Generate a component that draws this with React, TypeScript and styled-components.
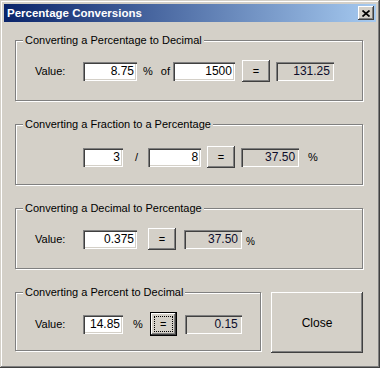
import { createGlobalStyle } from "styled-components";
import styled from "styled-components";

const face = "#d4d0c8";

const GlobalStyle = createGlobalStyle`
  html, body {
    margin: 0;
    padding: 0;
    background: ${face};
  }
  * {
    box-sizing: border-box;
  }
`;

export default function App() {
  return (
    <>
      <GlobalStyle />
      <Window>
        <TitleBar>
          <Title>Percentage Conversions</Title>
          <CloseBox aria-label="close">
            <svg width="8" height="7" viewBox="0 0 8 7">
              <path d="M0.5 0.5 L7.5 6.5 M7.5 0.5 L0.5 6.5" stroke="#000" strokeWidth="1.7" />
            </svg>
          </CloseBox>
        </TitleBar>

        <Body>
          <Group $height={61}>
            <Legend>Converting a Percentage to Decimal</Legend>
            <Row $top={19} $left={19}>
              <Label>Value:</Label>
              <Field defaultValue="8.75" $w={54} readOnly />
              <Text $ml={6}>%</Text>
              <Text $ml={8}>of</Text>
              <Field defaultValue="1500" $w={62} $ml={3} readOnly />
              <EqButton $ml={7}>=</EqButton>
              <Result $w={58} $ml={6}>131.25</Result>
            </Row>
          </Group>

          <Group $height={61}>
            <Legend>Converting a Fraction to a Percentage</Legend>
            <Row $top={21} $left={67}>
              <Field defaultValue="3" $w={40} readOnly />
              <Text $ml={12}>/</Text>
              <Field defaultValue="8" $w={53} $ml={10} readOnly />
              <EqButton $ml={6}>=</EqButton>
              <Result $w={58} $ml={6}>37.50</Result>
              <Text $ml={9}>%</Text>
            </Row>
          </Group>

          <Group $height={61}>
            <Legend>Converting a Decimal to Percentage</Legend>
            <Row $top={19} $left={19}>
              <Label>Value:</Label>
              <Field defaultValue="0.375" $w={54} readOnly />
              <EqButton $ml={11}>=</EqButton>
              <Result $w={58} $ml={8}>37.50</Result>
              <SmallPct>%</SmallPct>
            </Row>
          </Group>

          <Bottom>
            <Group $height={59} $width={246}>
              <Legend>Converting a Percent to Decimal</Legend>
              <Row $top={19} $left={19}>
                <Label>Value:</Label>
                <Field defaultValue="14.85" $w={40} readOnly />
                <Text $ml={10}>%</Text>
                <DefaultButton>
                  <Focus>=</Focus>
                </DefaultButton>
                <Result $w={57} $ml={8}>0.15</Result>
              </Row>
            </Group>
            <CloseButton>Close</CloseButton>
          </Bottom>
        </Body>
      </Window>
    </>
  );
}

const Window = styled.div`
  width: 380px;
  height: 368px;
  padding: 4px;
  background: ${face};
  font-family: "Liberation Sans", Arial, sans-serif;
  font-size: 11px;
  color: #000;
  box-shadow: inset -1px -1px #404040, inset 1px 1px ${face}, inset -2px -2px #808080,
    inset 2px 2px #fff;
  display: flex;
  flex-direction: column;
`;

const TitleBar = styled.div`
  height: 18px;
  display: flex;
  align-items: center;
  justify-content: space-between;
  padding: 0 2px 0 2px;
  background: linear-gradient(to right, #0a246a, #a6caf0);
`;

const Title = styled.span`
  color: #fff;
  font-weight: bold;
  font-size: 11.5px;
  padding-left: 1px;
`;

const CloseBox = styled.div`
  width: 16px;
  height: 14px;
  background: ${face};
  display: flex;
  align-items: center;
  justify-content: center;
  box-shadow: inset -1px -1px #404040, inset 1px 1px #fff, inset -2px -2px #808080,
    inset 2px 2px ${face};
`;

const Body = styled.div`
  display: flex;
  flex-direction: column;
  gap: 23px;
  padding: 18px 13px 0 11px;
`;

const Group = styled.div<{ $height: number; $width?: number }>`
  position: relative;
  height: ${({ $height }) => $height}px;
  width: ${({ $width }) => ($width ? `${$width}px` : "348px")};
  border: 1px solid #808080;
  box-shadow: inset 1px 1px #fff, 1px 1px #fff;
`;

const Legend = styled.span`
  position: absolute;
  top: -7px;
  left: 7px;
  padding: 0 2px;
  background: ${face};
  line-height: 13px;
  white-space: nowrap;
`;

const Row = styled.div<{ $top: number; $left: number }>`
  display: flex;
  align-items: center;
  padding: ${({ $top, $left }) => `${$top}px 0 0 ${$left}px`};
`;

const Label = styled.span`
  width: 48px;
`;

const Text = styled.span<{ $ml?: number }>`
  margin-left: ${({ $ml }) => $ml ?? 0}px;
`;

const SmallPct = styled.span`
  margin-left: 4px;
  font-size: 10px;
  padding-top: 5px;
`;

const Field = styled.input<{ $w: number; $ml?: number }>`
  width: ${({ $w }) => $w}px;
  height: 19px;
  margin: 0 0 0 ${({ $ml }) => $ml ?? 0}px;
  padding: 0 3px 0 2px;
  border: none;
  outline: none;
  background: #fff;
  font-family: "Liberation Sans", Arial, sans-serif;
  font-size: 12px;
  color: #000;
  text-align: right;
  box-shadow: inset 1px 1px #808080, inset 2px 2px #404040, inset -1px -1px #fff,
    inset -2px -2px ${face};
`;

const Result = styled.div<{ $w: number; $ml?: number }>`
  width: ${({ $w }) => $w}px;
  height: 19px;
  margin-left: ${({ $ml }) => $ml ?? 0}px;
  padding: 0 4px 0 2px;
  display: flex;
  align-items: center;
  justify-content: flex-end;
  font-size: 12px;
  color: #0c0c2a;
  box-shadow: inset 1px 1px #808080, inset 2px 2px #404040, inset -1px -1px #fff,
    inset -2px -2px ${face};
`;

const raised = `
  box-shadow: inset -1px -1px #404040, inset 1px 1px #fff, inset -2px -2px #808080,
    inset 2px 2px ${face};
`;

const EqButton = styled.div<{ $ml?: number }>`
  width: 28px;
  height: 22px;
  margin-left: ${({ $ml }) => $ml ?? 0}px;
  display: flex;
  align-items: center;
  justify-content: center;
  background: ${face};
  ${raised}
`;

const DefaultButton = styled.div`
  width: 27px;
  height: 24px;
  margin-left: 7px;
  padding: 3px;
  border: 1px solid #000;
  background: ${face};
  box-shadow: inset -1px -1px #404040, inset 1px 1px #fff, inset -2px -2px #808080;
`;

const Focus = styled.div`
  width: 100%;
  height: 100%;
  border: 1px dotted #000;
  display: flex;
  align-items: center;
  justify-content: center;
`;

const Bottom = styled.div`
  display: flex;
  align-items: flex-start;
  gap: 10px;
`;

const CloseButton = styled.div`
  width: 92px;
  height: 61px;
  display: flex;
  align-items: center;
  justify-content: center;
  font-size: 12px;
  background: ${face};
  ${raised}
`;
